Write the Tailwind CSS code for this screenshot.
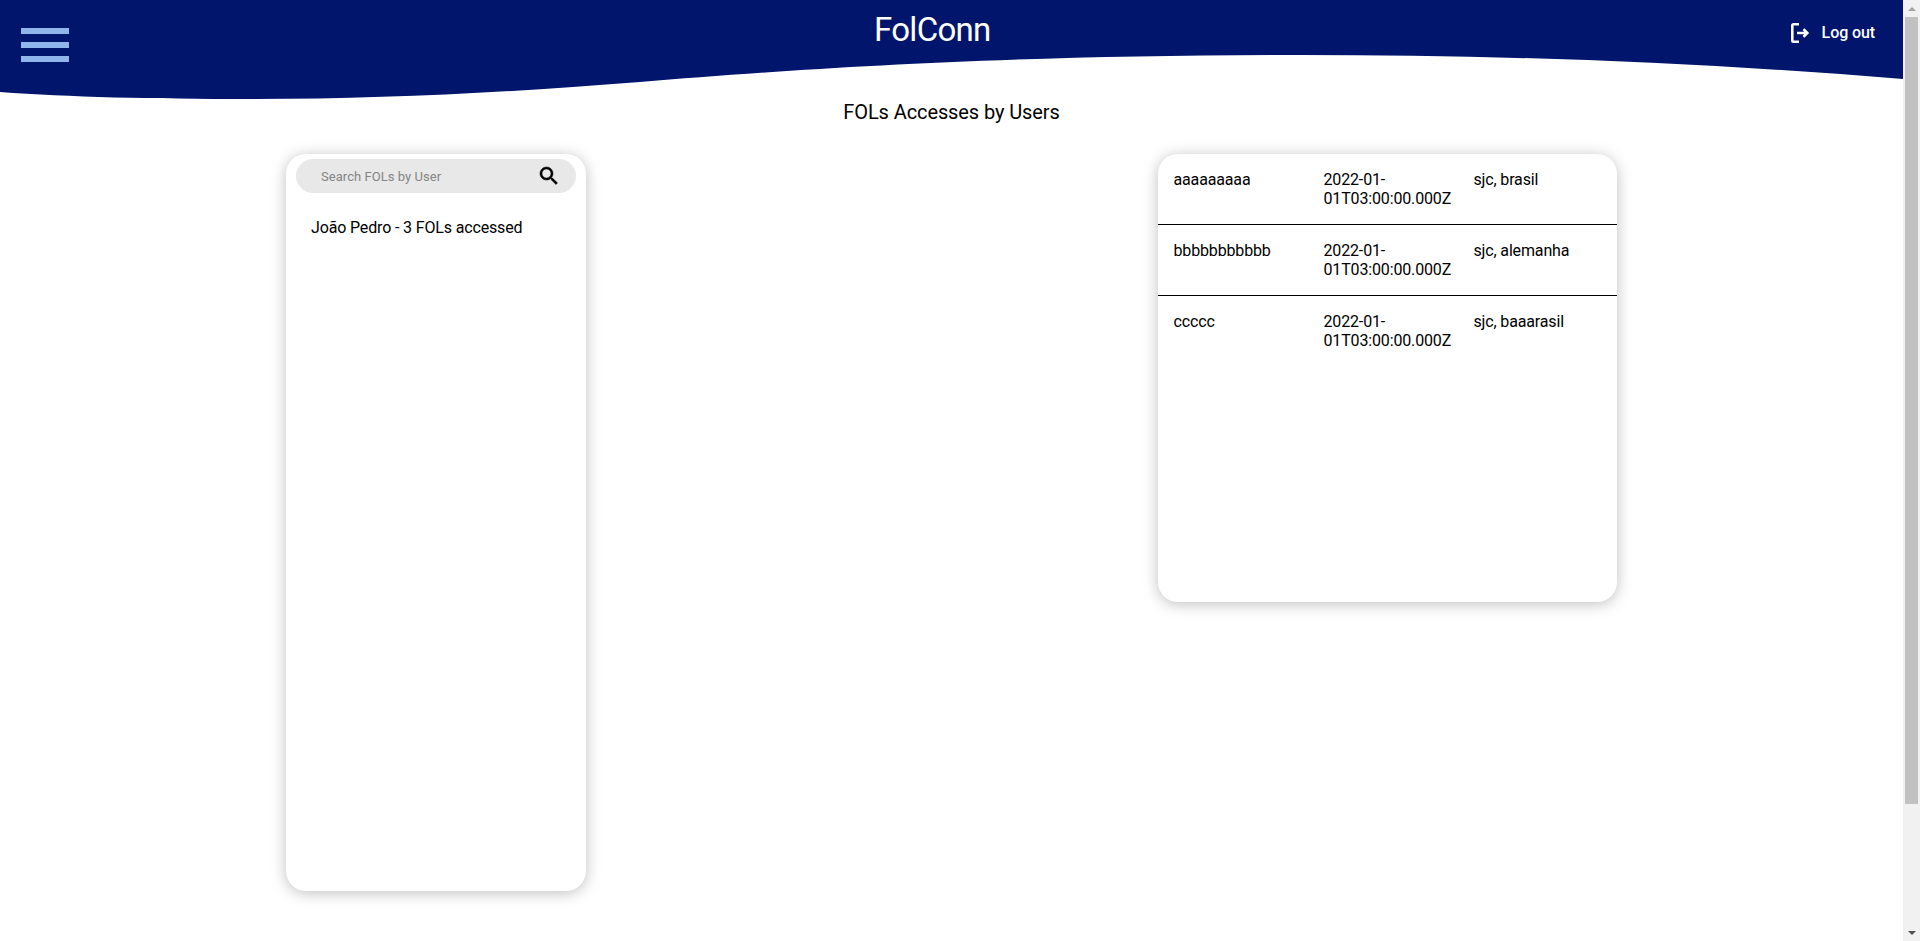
<!DOCTYPE html>
<html>
<head>
<meta charset="utf-8">
<title>FolConn</title>
<script src="https://cdn.jsdelivr.net/npm/@tailwindcss/browser@4"></script>
</head>
<body class="bg-white font-['Roboto',sans-serif] text-black">
<div class="flex h-[941px] w-[1920px] overflow-hidden">
  <div class="w-[1903px] shrink-0">
    <header class="relative h-[100px]">
      <svg class="absolute inset-0 h-[100px] w-[1903px]" viewBox="0 0 1903 100" preserveAspectRatio="none">
        <path fill="#00156b" d="M0 0H1903V79C1700 62 1500 55 1300 55C1000 55 800 69 640 82C500 93 380 99 250 99C150 99 70 97 0 92Z"/>
      </svg>
      <div class="relative flex items-start justify-between pl-[21px] pr-[28px]">
        <div class="mt-[28px] flex flex-col gap-[8px]">
          <span class="block h-[6px] w-[48px] bg-[#8fb5ea]"></span>
          <span class="block h-[6px] w-[48px] bg-[#8fb5ea]"></span>
          <span class="block h-[6px] w-[48px] bg-[#8fb5ea]"></span>
        </div>
        <h1 class="ml-[6px] mt-[11px] text-[33px] leading-[38px] tracking-[-0.7px] text-white">FolConn</h1>
        <button class="mt-[21px] flex items-center gap-[12px] text-[16px] font-medium leading-[24px] tracking-[-0.1px] text-white">
          <svg class="h-[24px] w-[20px]" viewBox="0 0 20 24" fill="none" stroke="currentColor" stroke-width="2.6">
            <path d="M9 3.3H3.5Q2.3 3.3 2.3 4.5V19.5Q2.3 20.7 3.5 20.7H9"/>
            <path d="M7 12H17M13.5 8.2L17.3 12L13.5 15.8"/>
          </svg>
          Log out
        </button>
      </div>
    </header>
    <h2 class="text-center text-[20px] leading-[24px] tracking-[-0.1px]">FOLs Accesses by Users</h2>
    <div class="mt-[30px] flex items-start justify-between px-[286px]">
      <section class="h-[737px] w-[300px] rounded-[20px] bg-white px-[10px] pt-[5px] shadow-[0_2px_15px_rgba(0,0,0,0.25)]">
        <div class="flex h-[34px] items-center justify-between rounded-full bg-[#e8e8e8] pl-[25px] pr-[15px]">
          <span class="relative top-[1px] text-[13px] tracking-[0.05px] text-[#858585]">Search FOLs by User</span>
          <svg class="h-[24px] w-[24px]" viewBox="0 0 24 24" fill="black" stroke="black" stroke-width="0.5"><path d="M15.5 14h-.79l-.28-.27C15.41 12.59 16 11.11 16 9.5 16 5.91 13.09 3 9.5 3S3 5.91 3 9.5 5.91 16 9.5 16c1.61 0 3.09-.59 4.23-1.57l.27.28v.79l5 4.99L20.49 19l-4.99-5zm-6 0C7.01 14 5 11.99 5 9.5S7.01 5 9.5 5 14 7.01 14 9.5 11.99 14 9.5 14z"/></svg>
        </div>
        <p class="mt-[25px] pl-[15px] text-[16px] leading-[19px] tracking-[-0.15px]">João Pedro - 3 FOLs accessed</p>
      </section>
      <section class="h-[448px] w-[459px] rounded-[20px] bg-white shadow-[0_2px_15px_rgba(0,0,0,0.25)]">
        <div class="grid h-[71px] grid-cols-[150px_150px_1fr] border-b border-black pl-[15.5px] pt-[16px] text-[16px] leading-[19px] tracking-[-0.15px]">
          <span>aaaaaaaaa</span><span class="w-[140px]">2022-01-01T03:00:00.000Z</span><span>sjc, brasil</span>
        </div>
        <div class="grid h-[71px] grid-cols-[150px_150px_1fr] border-b border-black pl-[15.5px] pt-[16px] text-[16px] leading-[19px] tracking-[-0.15px]">
          <span>bbbbbbbbbbb</span><span class="w-[140px]">2022-01-01T03:00:00.000Z</span><span>sjc, alemanha</span>
        </div>
        <div class="grid h-[71px] grid-cols-[150px_150px_1fr] pl-[15.5px] pt-[16px] text-[16px] leading-[19px] tracking-[-0.15px]">
          <span>ccccc</span><span class="w-[140px]">2022-01-01T03:00:00.000Z</span><span>sjc, baaarasil</span>
        </div>
      </section>
    </div>
  </div>
  <div class="flex w-[17px] shrink-0 flex-col items-center bg-[#f1f1f1]">
    <div class="flex h-[17px] w-full items-center justify-center">
      <span class="h-0 w-0 border-x-[4px] border-b-[4px] border-x-transparent border-b-[#a3a3a3]"></span>
    </div>
    <div class="h-[787px] w-[13px] bg-[#c1c1c1]"></div>
    <div class="mt-auto flex h-[17px] w-full items-center justify-center">
      <span class="h-0 w-0 border-x-[4px] border-t-[4px] border-x-transparent border-t-[#505050]"></span>
    </div>
  </div>
</div>
</body>
</html>
